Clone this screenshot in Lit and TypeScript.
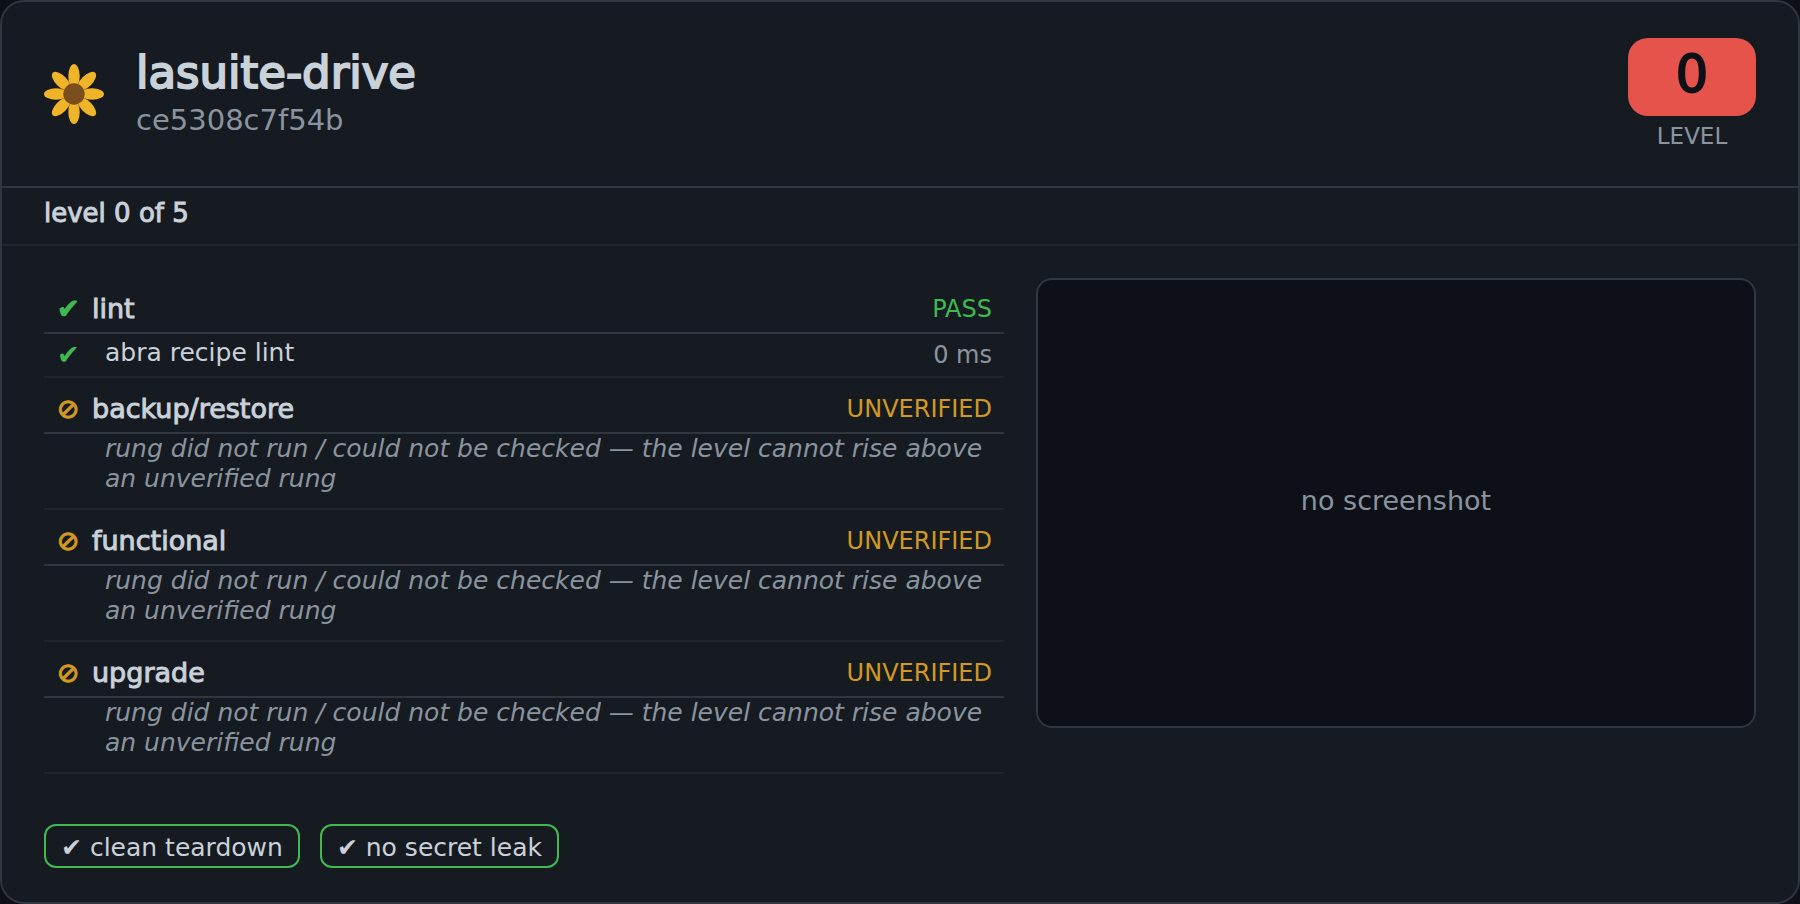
import { LitElement, html, css, svg, nothing } from "lit";
import { customElement, property } from "lit/decorators.js";

type Status = "pass" | "unverified";

interface Check {
  name: string;
  duration: string;
}

interface Rung {
  name: string;
  status: Status;
  checks?: Check[];
  note?: string;
}

const UNVERIFIED_NOTE =
  "rung did not run / could not be checked — the level cannot rise above an unverified rung";

const RUNGS: Rung[] = [
  { name: "lint", status: "pass", checks: [{ name: "abra recipe lint", duration: "0 ms" }] },
  { name: "backup/restore", status: "unverified", note: UNVERIFIED_NOTE },
  { name: "functional", status: "unverified", note: UNVERIFIED_NOTE },
  { name: "upgrade", status: "unverified", note: UNVERIFIED_NOTE },
];

const MARKS: Record<Status, string> = { pass: "✔", unverified: "⊘" };

@customElement("sunflower-logo")
export class SunflowerLogo extends LitElement {
  static styles = css`
    :host { display: block; flex: none; }
    .flower { display: block; width: 60px; height: 60px; }
    .petal { fill: #f0b429; }
    .core { fill: #7b4f1d; }
  `;

  render() {
    const angles = [0, 45, 90, 135, 180, 225, 270, 315];
    return html`
      <svg class="flower" viewBox="-30 -30 60 60" aria-hidden="true">
        ${angles.map(
          (a) => svg`<ellipse class="petal" cx="0" cy="-18" rx="5.7" ry="12" transform="rotate(${a})" />`
        )}
        <circle class="core" r="10.7" />
      </svg>
    `;
  }
}

@customElement("rung-table")
export class RungTable extends LitElement {
  @property({ attribute: false }) rungs: Rung[] = [];

  static styles = css`
    :host { display: block; }
    .rungs { width: 100%; border-collapse: separate; border-spacing: 0; }
    th, td { box-sizing: border-box; padding: 0; text-align: left; font-weight: 400; }
    .mark { width: 48px; padding-left: 13px; }
    .head th, .head td { height: 56px; padding-top: 8px; border-bottom: 2px solid #30363d; }
    .head th, .head .mark { font-size: 27px; line-height: 32px; -webkit-text-stroke: 1px currentColor; }
    .check td { height: 44px; border-bottom: 2px solid #21262d; }
    .check { font-size: 25px; line-height: 30px; }
    .check .mark { font-size: 27px; }
    .check .name { padding: 0 0 4px 13px; }
    .status, .duration { padding-right: 12px; text-align: right; font-size: 24px; line-height: 30px; }
    .duration { color: #8b949e; }
    .note td {
      height: 76px;
      vertical-align: top;
      border-bottom: 2px solid #21262d;
      color: #8b949e;
      font-size: 25px;
      line-height: 30px;
      font-style: italic;
    }
    .note .text { padding: 0 12px 0 13px; }
    .pass { color: #3fb950; }
    .unverified { color: #d29922; }
  `;

  private renderRung(rung: Rung) {
    return html`
      <tr class="head">
        <td class="mark ${rung.status}">${MARKS[rung.status]}</td>
        <th scope="row">${rung.name}</th>
        <td class="status ${rung.status}">${rung.status.toUpperCase()}</td>
      </tr>
      ${(rung.checks ?? []).map(
        (check) => html`
          <tr class="check">
            <td class="mark pass">${MARKS.pass}</td>
            <td class="name">${check.name}</td>
            <td class="duration">${check.duration}</td>
          </tr>
        `
      )}
      ${rung.note
        ? html`
            <tr class="note">
              <td class="mark"></td>
              <td class="text" colspan="2">${rung.note}</td>
            </tr>
          `
        : nothing}
    `;
  }

  render() {
    return html`<table class="rungs">
      <tbody>
        ${this.rungs.map((rung) => this.renderRung(rung))}
      </tbody>
    </table>`;
  }
}

@customElement("app-root")
export class AppRoot extends LitElement {
  static styles = css`
    :host {
      display: block;
      background: #0d1117;
      color: #c9d1d9;
      font-family: "DejaVu Sans", sans-serif;
    }
    .card {
      min-height: 100vh;
      box-sizing: border-box;
      border: 2px solid #30363d;
      border-radius: 24px;
      background: #161b22;
    }
    .header {
      display: flex;
      align-items: center;
      gap: 32px;
      padding: 36px 42px;
      border-bottom: 2px solid #30363d;
    }
    .titles { flex: 1; min-width: 0; padding-bottom: 4px; }
    .title { margin: 0; font-size: 45px; line-height: 56px; font-weight: 400; -webkit-text-stroke: 2px currentColor; }
    .commit { margin: 0; font-size: 29px; line-height: 38px; color: #8b949e; }
    .level { display: flex; flex-direction: column; align-items: center; gap: 6px; }
    .score {
      width: 128px;
      padding-bottom: 4px;
      border-radius: 20px;
      background: #e5534b;
      color: #0d1117;
      font-size: 51px;
      line-height: 74px;
      text-align: center;
      -webkit-text-stroke: 2px currentColor;
    }
    .caption { font-size: 23px; line-height: 28px; color: #8b949e; }
    .summary {
      margin: 0;
      padding: 9px 42px 15px;
      border-bottom: 2px solid #21262d;
      font-size: 26px;
      line-height: 32px;
      -webkit-text-stroke: 1px currentColor;
    }
    .body {
      display: grid;
      grid-template-columns: 4fr 3fr;
      align-items: start;
      gap: 32px;
      padding: 32px 42px 0;
    }
    .shot {
      display: flex;
      align-items: center;
      justify-content: center;
      aspect-ratio: 16 / 10;
      box-sizing: border-box;
      padding-bottom: 4px;
      border: 2px solid #30363d;
      border-radius: 16px;
      background: #0d1117;
      color: #8b949e;
      font-size: 27px;
      line-height: 32px;
    }
    .chips { display: flex; flex-wrap: wrap; gap: 20px; margin: 0; padding: 50px 42px 32px; list-style: none; }
    .chip {
      padding: 8px 15px 4px;
      border: 2px solid #3fb950;
      border-radius: 12px;
      font-size: 25px;
      line-height: 28px;
    }
  `;

  render() {
    return html`
      <main class="card">
        <header class="header">
          <sunflower-logo></sunflower-logo>
          <div class="titles">
            <h1 class="title">lasuite-drive</h1>
            <p class="commit">ce5308c7f54b</p>
          </div>
          <div class="level">
            <div class="score">0</div>
            <div class="caption">LEVEL</div>
          </div>
        </header>
        <p class="summary">level 0 of 5</p>
        <div class="body">
          <rung-table .rungs=${RUNGS}></rung-table>
          <div class="shot">no screenshot</div>
        </div>
        <ul class="chips">
          <li class="chip">✔ clean teardown</li>
          <li class="chip">✔ no secret leak</li>
        </ul>
      </main>
    `;
  }
}
